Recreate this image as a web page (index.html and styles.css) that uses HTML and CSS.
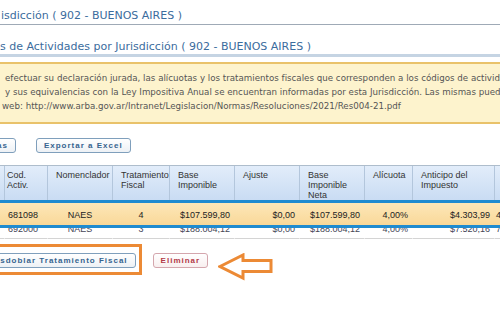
FILE: index.html
```html
<!DOCTYPE html>
<html lang="es">
<head>
    <meta charset="UTF-8">
    <meta name="viewport" content="width=device-width, initial-scale=1.0">
    <title>Alícuotas por Jurisdicción</title>
    <link rel="stylesheet" href="styles.css">
</head>
<body>
    <div class="page">
        <h1 class="title">isdicción ( 902 - BUENOS AIRES )</h1>
        <h2 class="subtitle">s de Actividades por Jurisdicción ( 902 - BUENOS AIRES )</h2>

        <div class="note">
            <div class="note-line">efectuar su declaración jurada, las alícuotas y los tratamientos fiscales que corresponden a los códigos de actividades</div>
            <div class="note-line">y sus equivalencias con la Ley Impositiva Anual se encuentran informadas por esta Jurisdicción. Las mismas pueden ser consultadas en la página</div>
            <div class="note-line url">web: http://www.arba.gov.ar/Intranet/Legislacion/Normas/Resoluciones/2021/Res004-21.pdf</div>
        </div>

        <div class="toolbar">
            <button class="btn btn-cut">as</button>
            <button class="btn">Exportar a Excel</button>
        </div>

        <div class="grid-wrap">
            <table class="grid">
                <colgroup>
                    <col class="c-jur">
                    <col class="c-cod">
                    <col class="c-nom">
                    <col class="c-trat">
                    <col class="c-base">
                    <col class="c-aju">
                    <col class="c-neta">
                    <col class="c-alic">
                    <col class="c-anti">
                    <col class="c-more">
                </colgroup>
                <thead>
                    <tr>
                        <th></th>
                        <th class="first">Cod.<br>Activ.</th>
                        <th>Nomenclador</th>
                        <th>Tratamiento<br>Fiscal</th>
                        <th>Base<br>Imponible</th>
                        <th>Ajuste</th>
                        <th>Base<br>Imponible<br>Neta</th>
                        <th>Alícuota</th>
                        <th>Anticipo del<br>Impuesto</th>
                        <th class="last"></th>
                    </tr>
                </thead>
                <tbody>
                    <tr class="selected">
                        <td></td>
                        <td class="first">681098</td>
                        <td class="center">NAES</td>
                        <td class="center">4</td>
                        <td class="num">$107.599,80</td>
                        <td class="num">$0,00</td>
                        <td class="num">$107.599,80</td>
                        <td class="num">4,00%</td>
                        <td class="num">$4.303,99</td>
                        <td class="last">4</td>
                    </tr>
                    <tr class="next">
                        <td></td>
                        <td class="first">692000</td>
                        <td class="center">NAES</td>
                        <td class="center">3</td>
                        <td class="num">$188.004,12</td>
                        <td class="num">$0,00</td>
                        <td class="num">$188.004,12</td>
                        <td class="num">4,00%</td>
                        <td class="num">$7.520,16</td>
                        <td class="last">7</td>
                    </tr>
                </tbody>
            </table>
            <!-- selection marker over the first data row -->
            <div class="sel-box"></div>
        </div>

        <div class="actions">
            <div class="highlight">
                <button class="btn">Desdoblar Tratamiento Fiscal</button>
            </div>
            <button class="btn btn-danger">Eliminar</button>
            <svg class="arrow" width="56" height="28" viewBox="0 0 56 28">
                <polygon points="2,13.5 25,2 25,7.5 53,7.5 53,18.5 25,18.5 25,25" fill="#fff" stroke="#ec8a35" stroke-width="3" stroke-linejoin="miter"/>
            </svg>
        </div>
    </div>
</body>
</html>
```

FILE: styles.css
```css
html, body{
    margin: 0;
    padding: 0;
    overflow: hidden;
    background: #fff;
}
.page{
    width: 500px;
    height: 319px;
    overflow: hidden;
}
.title{
    margin: 0;
    padding: 9px 0 1px 1px;
    font-family: "DejaVu Sans", sans-serif;
    font-size: 11px;
    font-weight: normal;
    line-height: 14px;
    color: #3b6c9d;
    border-bottom: 1px solid #9faab6;
    white-space: nowrap;
}
.subtitle{
    margin: 15px 0 0 0;
    padding: 0;
    font-family: "DejaVu Sans", sans-serif;
    font-size: 11px;
    font-weight: normal;
    line-height: 14px;
    color: #3b6c9d;
    border-bottom: 3px solid #c5d4e3;
    white-space: nowrap;
}
.note{
    margin: 5px -20px 0 -10px;
    padding: 7px 0 9px 13px;
    background-color: #fdf3cd;
    border: 2px solid #e9c26a;
    font-family: "DejaVu Sans", sans-serif;
    font-size: 8.7px;
    line-height: 14px;
    color: #555;
    white-space: nowrap;
    overflow: hidden;
}
.note-line.url{
    margin-left: -3px;
}
.toolbar{
    display: flex;
    gap: 20px;
    margin: 14px 0 0 -11px;
}
.btn{
    height: 15px;
    padding: 0 7px;
    border: 1px solid #7f9fbc;
    border-radius: 3px;
    background: linear-gradient(#ffffff, #edf1f5);
    color: #36648f;
    font-family: "Liberation Sans", sans-serif;
    font-size: 8px;
    font-weight: bold;
    letter-spacing: 1px;
    line-height: 13px;
    white-space: nowrap;
}
.btn-danger{
    color: #b23a48;
    border-color: #d4a6ad;
    background: linear-gradient(#ffffff, #f8efef);
    margin: 9px 0 0 11px;
}
.grid-wrap{
    position: relative;
    margin-top: 12px;
}
.grid{
    table-layout: fixed;
    width: 595px;
    margin-left: -40px;
    border-collapse: separate;
    border-spacing: 0;
    border-top: 1px solid #aebdcc;
    font-family: "Liberation Sans", sans-serif;
    font-size: 9px;
}
.c-jur{ width: 45px; }
.c-cod{ width: 43px; }
.c-nom{ width: 65px; }
.c-trat{ width: 57px; }
.c-base{ width: 65px; }
.c-aju{ width: 65px; }
.c-neta{ width: 65px; }
.c-alic{ width: 48px; }
.c-anti{ width: 82px; }
.c-more{ width: 60px; }
.grid th{
    height: 30px;
    padding: 4px 2px 0 8px;
    background: linear-gradient(#e2edfa, #c9dcf3);
    border-right: 1px solid #b3c6dc;
    color: #333;
    font-weight: normal;
    text-align: left;
    vertical-align: top;
    line-height: 10px;
    white-space: nowrap;
    overflow: hidden;
}
.grid th.first{
    padding-left: 2px;
}
.grid td{
    border-right: 1px solid transparent;
    color: #222;
    white-space: nowrap;
    overflow: hidden;
}
.grid td.first{ padding-left: 3px; }
.grid td.center{ text-align: center; }
.grid td.num{ text-align: right; padding-right: 4px; }
.grid td.last{ padding-left: 1px; }
.selected td{
    padding-top: 8px;
    padding-bottom: 3px;
    line-height: 14px;
    background: linear-gradient(#fde9bc, #f9d899);
}
.next td{
    padding-top: 0;
    padding-bottom: 4px;
    line-height: 9px;
    border-bottom: 1px solid #d4d4d4;
    color: #445;
}
.sel-box{
    position: absolute;
    left: 0;
    right: 0;
    top: 35px;
    height: 22px;
    border-top: 3px solid #1f8bd0;
    border-bottom: 3px solid #1f8bd0;
    pointer-events: none;
}
.actions{
    display: flex;
    align-items: flex-start;
    margin: 5px 0 0 -26px;
}
.highlight{
    display: flex;
    padding: 6px 3px 4px 3px;
    border: 3px solid #ec8a35;
}
.arrow{
    display: block;
    margin: 9px 0 0 10px;
}
```
